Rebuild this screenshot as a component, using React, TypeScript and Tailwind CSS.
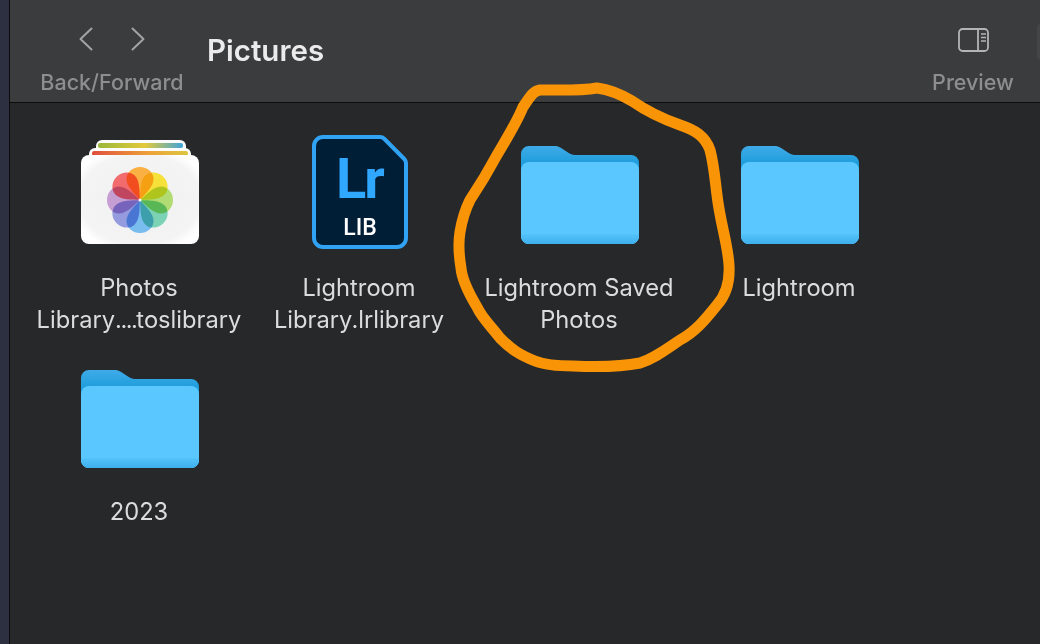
const petals = [
  { angle: 0, color: "#fb9f17" },
  { angle: 45, color: "#f6dc0c" },
  { angle: 90, color: "#a0d552" },
  { angle: 135, color: "#5cc9a4" },
  { angle: 180, color: "#5aaeec" },
  { angle: 225, color: "#7c85d8" },
  { angle: 270, color: "#b98acb" },
  { angle: 315, color: "#f1494b" },
];

function PhotosIcon() {
  return (
    <svg width="118" height="104" viewBox="0 0 118 104" className="block">
      <defs>
        <linearGradient id="stripe" x1="0" x2="1" y1="0" y2="0">
          <stop offset="0" stopColor="#9ab83a" />
          <stop offset="0.55" stopColor="#e3c93a" />
          <stop offset="1" stopColor="#3fa5d8" />
        </linearGradient>
        <linearGradient id="stripe2" x1="0" x2="1" y1="0" y2="0">
          <stop offset="0" stopColor="#e0503c" />
          <stop offset="0.6" stopColor="#eea23a" />
          <stop offset="1" stopColor="#dcc63e" />
        </linearGradient>
        <radialGradient id="card" cx="0.5" cy="0.5" r="0.6">
          <stop offset="0" stopColor="#f0f0f1" />
          <stop offset="0.85" stopColor="#f4f4f5" />
          <stop offset="1" stopColor="#ffffff" />
        </radialGradient>
      </defs>
      <rect x="15" y="0" width="90" height="30" rx="6" fill="#fafafa" />
      <rect x="17" y="3" width="85" height="5" rx="2" fill="url(#stripe)" />
      <rect x="8" y="8" width="102" height="30" rx="6" fill="#fdfdfd" />
      <rect x="11" y="11" width="96" height="5" rx="2" fill="url(#stripe2)" />
      <rect x="0" y="15" width="118" height="89" rx="8" fill="url(#card)" />
      <g transform="translate(59 60)" className="isolate">
        {petals.map((petal) => (
          <path
            key={petal.angle}
            d="M0 0C-5-6-13.500-13-13.500-21A13.500 12 0 0 1 13.500-21C13.500-13 5-6 0 0Z"
            fill={petal.color}
            fillOpacity="0.8"
            transform={`rotate(${petal.angle})`}
            className="mix-blend-multiply"
          />
        ))}
        <circle r="1.6" fill="#f5f5f6" />
      </g>
    </svg>
  );
}

function LrIcon() {
  return (
    <svg width="96" height="114" viewBox="0 0 96 114" className="-mb-[5px] block">
      <path
        d="M11 2H68a6 6 0 0 1 4.200 1.700L92.300 24a6 6 0 0 1 1.700 4.200V103a9 9 0 0 1-9 9H11a9 9 0 0 1-9-9V11a9 9 0 0 1 9-9Z"
        fill="#001e36"
        stroke="#31a3f5"
        strokeWidth="4"
      />
      <text x="24" y="63" fill="#31a8ff" fontFamily="Roboto, sans-serif" fontWeight="700" fontSize="56" letterSpacing="-2">
        Lr
      </text>
      <text x="48" y="100" textAnchor="middle" fill="#ffffff" fontFamily="Roboto, sans-serif" fontWeight="500" fontSize="23">
        LIB
      </text>
    </svg>
  );
}

function FolderIcon() {
  return (
    <svg width="118" height="99" viewBox="0 0 118 99" className="block">
      <defs>
        <linearGradient id="folderBack" x1="0" x2="0" y1="0" y2="1">
          <stop offset="0" stopColor="#3fabe8" />
          <stop offset="0.18" stopColor="#1f9ddc" />
        </linearGradient>
        <linearGradient id="folderBottom" x1="0" x2="0" y1="0" y2="1">
          <stop offset="0" stopColor="#55c3fa" />
          <stop offset="1" stopColor="#3dafec" />
        </linearGradient>
      </defs>
      <path
        d="M8 1H33c3 0 5 .5 7.500 2.200L47 7.600c2.200 1.500 4 2.400 7 2.400H110a8 8 0 0 1 8 8V91a8 8 0 0 1-8 8H8a8 8 0 0 1-8-8V9a8 8 0 0 1 8-8Z"
        fill="url(#folderBack)"
      />
      <path
        d="M8 17H110a8 8 0 0 1 8 8V91a8 8 0 0 1-8 8H8a8 8 0 0 1-8-8V25a8 8 0 0 1 8-8Z"
        fill="#5ac8fe"
      />
      <path d="M0 89H118V91a8 8 0 0 1-8 8H8a8 8 0 0 1-8-8Z" fill="url(#folderBottom)" />
    </svg>
  );
}

function FileItem({ icon, name }: { icon: React.ReactNode; name: React.ReactNode[] }) {
  return (
    <div className="flex h-[224px] w-[220px] flex-col items-center">
      <div className="flex h-[109px] items-end pl-[2px]">{icon}</div>
      <div className="mt-[28px] text-center text-[23.7px] leading-[32px] whitespace-nowrap text-[#dcdcdd]">
        {name.map((line, i) => (
          <div key={i}>{line}</div>
        ))}
      </div>
    </div>
  );
}

export default function App() {
  return (
    <div className="relative flex h-[644px] w-[1040px] overflow-hidden bg-[#2d3040] font-['Inter',sans-serif]">
      <div className="w-[9px] shrink-0" />
      <div className="flex flex-1 flex-col border-l border-[#0b0b0c]">
        <header className="flex h-[103px] items-start border-b border-[#0c0c0d] bg-[#3b3c3e]">
          <div className="ml-[30px] flex w-[144px] flex-col items-center pt-[27px]">
            <div className="flex h-[24px] gap-[38px]">
              <svg width="14" height="24" viewBox="0 0 14 24" fill="none" stroke="#a3a3a4" strokeWidth="2" strokeLinecap="round" strokeLinejoin="round">
                <path d="M12.500 1.500 1.500 12l11 10.500" />
              </svg>
              <svg width="14" height="24" viewBox="0 0 14 24" fill="none" stroke="#a3a3a4" strokeWidth="2" strokeLinecap="round" strokeLinejoin="round">
                <path d="m1.500 1.500 11 10.500-11 10.500" />
              </svg>
            </div>
            <div className="mt-[18px] text-[21.5px] leading-[26px] font-medium whitespace-nowrap text-[#8e8e8f]">
              Back/Forward
            </div>
          </div>
          <h1 className="mt-[33px] ml-[23px] text-[29.5px] leading-[34px] font-semibold text-[#ebebec]">
            Pictures
          </h1>
          <div className="mt-[28px] ml-auto mr-[23px] flex w-[82px] flex-col items-center">
            <svg width="32" height="25" viewBox="0 0 32 25" fill="none" stroke="#b4b4b5" strokeWidth="1.8" className="translate-x-[1px]">
              <rect x="1" y="1" width="29" height="22" rx="3.5" />
              <path d="M20 1v22" />
              <path d="M23 6h5M23 9.500h5M23 13h5" strokeWidth="1.3" />
            </svg>
            <div className="mt-[16px] text-[21.5px] leading-[26px] font-medium text-[#8e8e8f]">Preview</div>
          </div>
          <div className="mt-[24px] h-[36px] w-[3px] rounded-l-[3px] bg-[#444547]" />
        </header>
        <main className="grid flex-1 grid-cols-[repeat(4,220px)] content-start bg-[#27282a] pt-[32px] pl-[19px]">
          <FileItem
            icon={<PhotosIcon />}
            name={[
              "Photos",
              <>
                Library<span className="tracking-[-1.5px]">....</span>toslibrary
              </>,
            ]}
          />
          <FileItem icon={<LrIcon />} name={["Lightroom", "Library.lrlibrary"]} />
          <FileItem icon={<FolderIcon />} name={["Lightroom Saved", "Photos"]} />
          <FileItem icon={<FolderIcon />} name={["Lightroom"]} />
          <FileItem icon={<FolderIcon />} name={["2023"]} />
        </main>
      </div>
      <svg
        width="1040"
        height="644"
        viewBox="0 0 1040 644"
        fill="none"
        className="pointer-events-none absolute inset-0"
      >
        <path
          d="M540 90C560 90 580 91 597 88C612 90 622 95 632 101C645 110 660 118 680 125C695 130 705 136 710 150C714 165 715 180 717 195C720 222 728 245 729 265C730 282 726 295 717 305C705 320 695 332 680 340C665 350 655 358 640 363C620 367 595 367 573 366C555 366 545 365 535 361C520 355 512 350 500 338C490 325 482 318 477 307C468 292 462 280 461 268C458 250 459 238 460 232C462 220 466 208 470 200C480 185 490 168 497 155C507 138 517 122 523 107C530 97 533 91 540 90Z"
          stroke="#f99407"
          strokeWidth="11"
          strokeLinejoin="round"
        />
      </svg>
    </div>
  );
}
